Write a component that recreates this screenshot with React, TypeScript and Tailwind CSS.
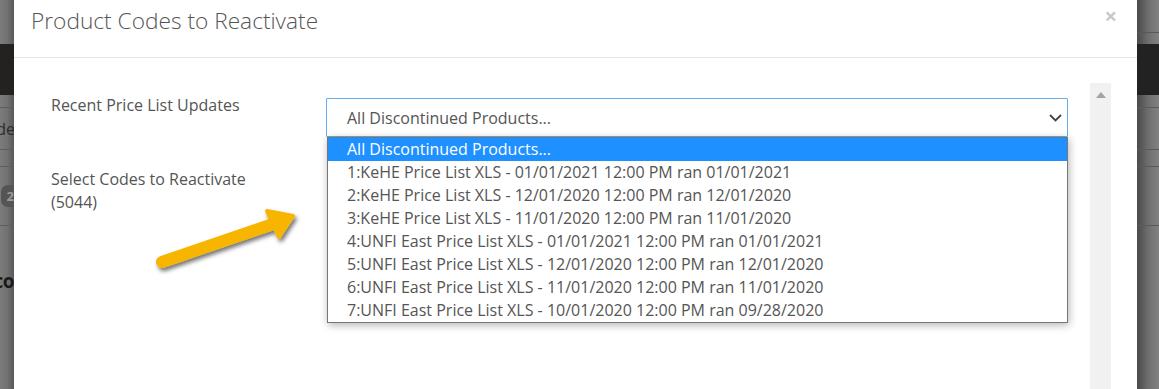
import React from "react";

const options = [
  "All Discontinued Products...",
  "1:KeHE Price List XLS - 01/01/2021 12:00 PM ran 01/01/2021",
  "2:KeHE Price List XLS - 12/01/2020 12:00 PM ran 12/01/2020",
  "3:KeHE Price List XLS - 11/01/2020 12:00 PM ran 11/01/2020",
  "4:UNFI East Price List XLS - 01/01/2021 12:00 PM ran 01/01/2021",
  "5:UNFI East Price List XLS - 12/01/2020 12:00 PM ran 12/01/2020",
  "6:UNFI East Price List XLS - 11/01/2020 12:00 PM ran 11/01/2020",
  "7:UNFI East Price List XLS - 10/01/2020 12:00 PM ran 09/28/2020",
];

function LeftStrip() {
  return (
    <div className="w-[14px] shrink-0 h-full flex flex-col overflow-hidden bg-gradient-to-r from-[#7c7c7c] via-[#727272] to-[#595959]">
      <div className="h-[44px]" />
      <div className="h-[51px] bg-[#242220]" />
      <div className="h-[12px]" />
      <div className="h-px bg-[#5e5e5e]" />
      <div className="h-[41px] flex items-center justify-end whitespace-nowrap text-[16px] text-[#2b2b2b]">
        <span className="-mr-[1px]">Code</span>
      </div>
      <div className="h-px bg-[#5e5e5e]" />
      <div className="h-[16px]" />
      <div className="h-px bg-[#5e5e5e]" />
      <div className="h-[58px] flex items-center justify-end">
        <span className="-mr-[6px] rounded-[7px] bg-[#555] text-[#9a9a9a] font-bold text-[13px] leading-[22px] px-[6px]">2</span>
      </div>
      <div className="h-px bg-[#5e5e5e]" />
      <div className="h-[100px] flex items-start justify-end pt-[41px] whitespace-nowrap">
        <span className="text-[19px] font-bold text-[#1a1a1a] tracking-[-0.5px]">Reco</span>
      </div>
    </div>
  );
}

function RightStrip() {
  return (
    <div className="w-[22px] shrink-0 h-full flex flex-col bg-gradient-to-r from-[#4a4a4a] via-[#6e6e6e] to-[#828282]">
      <div className="h-[32px]" />
      <div className="h-px bg-[#585858]" />
      <div className="h-[11px]" />
      <div className="h-[51px] bg-[#222222]" />
      <div className="h-[12px]" />
      <div className="h-px bg-[#5a5a5a]" />
      <div className="h-[41px]" />
      <div className="h-px bg-[#5a5a5a]" />
      <div className="h-[16px]" />
      <div className="h-px bg-[#5a5a5a]" />
      <div className="h-[58px]" />
      <div className="h-px bg-[#5a5a5a]" />
    </div>
  );
}

export default function App() {
  return (
    <div
      className="flex w-[1159px] h-[389px] overflow-hidden bg-[#777]"
      style={{ fontFamily: "'Open Sans', 'Noto Sans', sans-serif" }}
    >
      <LeftStrip />
      <div className="flex-1 bg-white flex flex-col relative">
        <div className="h-[58px] shrink-0 border-b border-[#e5e5e5] flex items-start justify-between pl-[17px] pr-[20px]">
          <h1 className="text-[22.7px] leading-[32px] mt-[5px] text-[#555] font-light">
            Product Codes to Reactivate
          </h1>
          <span className="text-[#c9c9c9] text-[22px] font-bold leading-[22px] mt-[4px]">×</span>
        </div>
        <div className="flex flex-1 pt-[25px] pr-[26px]">
          <div className="flex-1 pl-[37px] pr-[22px] pt-[11px] text-[16px] leading-[23px] text-[#555]">
            <div className="flex items-start">
              <label className="w-[275px] shrink-0">Recent Price List Updates</label>
              <div className="flex-1 relative mt-[4px]">
                <div className="h-[39px] border border-[#66afe9] rounded-[1px] flex items-center justify-between pl-[20px] pr-[5px] text-[#555]">
                  <span className="pt-[2px]">All Discontinued Products...</span>
                  <svg width="13" height="8" viewBox="0 0 13 8">
                    <path d="M1 1 L6.5 6.5 L12 1" fill="none" stroke="#444" strokeWidth="1.8" />
                  </svg>
                </div>
                <div className="absolute left-[1px] right-0 top-[39px] z-10 bg-white border border-[#767676] shadow-[1px_2px_8px_rgba(0,0,0,0.3)]">
                  {options.map((o, i) => (
                    <div
                      key={o}
                      className={
                        i === 0
                          ? "h-[23px] leading-[23px] pl-[19px] bg-[#1e90ff] text-white whitespace-nowrap"
                          : "h-[23px] leading-[23px] pl-[19px] text-[#555] whitespace-nowrap"
                      }
                    >
                      {o}
                    </div>
                  ))}
                </div>
              </div>
            </div>
            <div className="flex mt-[31px]">
              <label className="w-[275px] shrink-0">
                Select Codes to Reactivate
                <br />
                (5044)
              </label>
            </div>
          </div>
          <div className="w-[21px] shrink-0 bg-[#f1f1f1] flex justify-center pt-[9px]">
            <svg width="10" height="6" viewBox="0 0 10 6">
              <path d="M5 0 L10 6 L0 6 Z" fill="#a3a3a3" />
            </svg>
          </div>
        </div>
        <svg
          className="absolute left-[126px] top-[195px] pointer-events-none"
          width="180"
          height="90"
          viewBox="0 0 180 90"
        >
          <defs>
            <filter id="sh" x="-20%" y="-40%" width="140%" height="180%">
              <feDropShadow dx="2" dy="3" stdDeviation="2" floodColor="#000" floodOpacity="0.55" />
            </filter>
          </defs>
          <g filter="url(#sh)">
            <line x1="22" y1="67" x2="136" y2="28" stroke="#f7b500" strokeWidth="12" strokeLinecap="round" />
            <path d="M127 16 L153 21 L139 42 Z" fill="#f7b500" stroke="#f7b500" strokeWidth="4" strokeLinejoin="round" />
          </g>
        </svg>
      </div>
      <RightStrip />
    </div>
  );
}
